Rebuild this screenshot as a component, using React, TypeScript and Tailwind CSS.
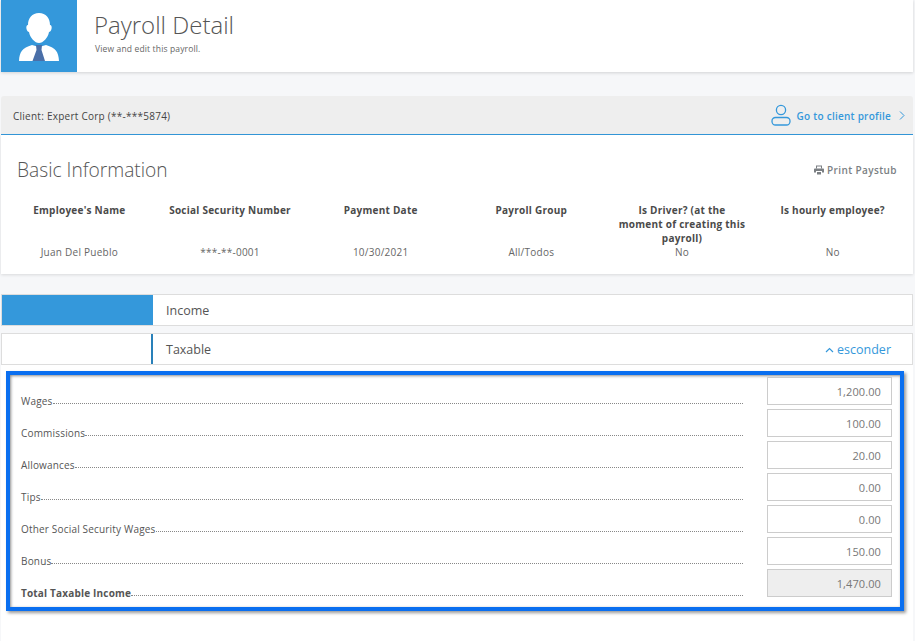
import React from 'react';

const columns = [
  { title: "Employee's Name", value: 'Juan Del Pueblo' },
  { title: 'Social Security Number', value: '***-**-0001' },
  { title: 'Payment Date', value: '10/30/2021' },
  { title: 'Payroll Group', value: 'All/Todos' },
  { title: 'Is Driver? (at the moment of creating this payroll)', value: 'No' },
  { title: 'Is hourly employee?', value: 'No' },
];

const incomeRows = [
  { label: 'Wages', amount: '1,200.00' },
  { label: 'Commissions', amount: '100.00' },
  { label: 'Allowances', amount: '20.00' },
  { label: 'Tips', amount: '0.00' },
  { label: 'Other Social Security Wages', amount: '0.00' },
  { label: 'Bonus', amount: '150.00' },
  { label: 'Total Taxable Income', amount: '1,470.00', total: true },
];

// Employee avatar with tie, header logo
const EmployeeIcon = () => (
  <svg width="40" height="50" viewBox="0 0 40 50">
    <path d="M20 1 C27 1 31 6 31 13 C32.500 13 33 15 32.500 17 C32 19 31 20 30 20 C29 26 24 31 20 31 C16 31 11 26 10 20 C9 20 8 19 7.500 17 C7 15 7.500 13 9 13 C9 6 13 1 20 1 Z" fill="#fff" />
    <path d="M0 49 C0.500 40 3 36 13 33 L20 35 L27 33 C37 36 39.500 40 40 49 Z" fill="#fff" />
    <path d="M17 33 H23 L22.500 38 L26 49 H13.500 L17.500 38 Z" fill="#4a6fa8" />
  </svg>
);

const UserOutlineIcon = () => (
  <svg width="20" height="22" viewBox="0 0 20 22" fill="none" stroke="#3498db" strokeWidth="1.300">
    <circle cx="10" cy="6" r="4.600" />
    <rect x="1" y="13.500" width="18" height="7.500" rx="3.500" />
  </svg>
);

const PrinterIcon = () => (
  <svg width="10" height="10" viewBox="0 0 10 10" fill="#7b7f83">
    <path d="M2 0.500 H8 V3.500 H7 V1.500 H3 V3.500 H2 Z" />
    <path d="M1 3.500 H9 C9.600 3.500 10 3.900 10 4.500 V7.500 H8 V6 H2 V7.500 H0 V4.500 C0 3.900 0.400 3.500 1 3.500 Z" />
    <path d="M3 7 H7 V9.500 H3 Z" />
  </svg>
);

export default function App() {
  return (
    <div className="h-[641px] w-[915px] overflow-hidden bg-[#f6f7f9] pl-px pr-[2px] font-['Open_Sans',sans-serif] text-[#555]">
      {/* Page header */}
      <div className="flex h-[72px] bg-white shadow-[0_1px_3px_rgba(0,0,0,0.15)]">
        <div className="flex w-[76px] items-center justify-center bg-[#3498db] pt-px">
          <EmployeeIcon />
        </div>
        <div className="pl-[17px] pt-[9px]">
          <h1 className="text-[24px] leading-[32px] font-light text-[#555]">Payroll Detail</h1>
          <p className="mt-[2px] pl-px text-[8.500px] leading-[12px] tracking-[0.15px] text-[#666]">View and edit this payroll.</p>
        </div>
      </div>

      {/* Client bar */}
      <div className="mt-6 flex h-[39px] items-center justify-between rounded-t-[3px] border-b border-[#3498db] bg-[#eeeeee] pl-3 pr-2">
        <span className="translate-y-px text-[10px] tracking-[0.25px] text-[#444]">Client: Expert Corp (**-***5874)</span>
        <a className="flex items-center text-[10px] font-semibold tracking-[0.25px] text-[#3498db]">
          <UserOutlineIcon />
          <span className="ml-[6px] translate-y-px">Go to client profile</span>
          <svg width="6" height="9" viewBox="0 0 6 9" fill="none" stroke="#3498db" strokeWidth="1" className="ml-[8px]">
            <path d="M1 0.500 L5 4.500 L1 8.500" />
          </svg>
        </a>
      </div>

      {/* Basic information */}
      <div className="h-[139px] bg-white shadow-[0_1px_3px_rgba(0,0,0,0.12)]">
        <div className="flex items-center justify-between pl-[16px] pr-[16px] pt-[21px]">
          <h2 className="text-[19.200px] leading-[28px] font-light text-[#555]">Basic Information</h2>
          <button className="flex items-center gap-[3px] text-[10px] font-semibold tracking-[0.4px] text-[#7b7f83]">
            <PrinterIcon />
            Print Paystub
          </button>
        </div>
        <div className="mt-[19px] grid grid-cols-6 pl-[3px] pr-[5px]">
          {columns.map((col) => (
            <div key={col.title} className="flex flex-col px-3 text-center">
              <div className="h-[42px] text-[10px] leading-[14px] font-bold tracking-[0.25px] text-[#4a4a4a]">{col.title}</div>
              <div className="text-[10px] leading-[14px] tracking-[0.25px] text-[#666]">{col.value}</div>
            </div>
          ))}
        </div>
      </div>

      {/* Income section */}
      <div className="mt-5 flex h-[32px] border border-[#dddddd] bg-white">
        <div className="w-[151px] bg-[#3498db]" />
        <div className="flex translate-y-px items-center pl-[13px] text-[12.500px] text-[#555]">Income</div>
      </div>
      <div className="mt-[7px] flex h-[32px] items-center border border-[#dddddd] bg-white">
        <div className="h-full w-[151px] border-r-2 border-[#2980b9]" />
        <div className="flex flex-1 translate-y-px items-center justify-between pl-[13px] pr-[21px]">
          <span className="text-[12.500px] text-[#555]">Taxable</span>
          <span className="flex items-center text-[12.500px] text-[#3498db]">
            <svg width="9" height="6" viewBox="0 0 9 6" fill="none" stroke="#3498db" strokeWidth="1.200" className="mr-[3px]">
              <path d="M1 5 L4.500 1.500 L8 5" />
            </svg>
            esconder
          </span>
        </div>
      </div>

      {/* Taxable detail, outlined in blue in the screenshot */}
      <div className="h-[276px] bg-white pl-[5px] pr-[9px] pt-[6px]">
        <div className="h-[240px] border-4 border-[#0a6ff0] bg-white pl-[11px] pr-[8px] pt-[2px] shadow-[inset_1px_1px_3px_rgba(0,0,0,0.45),2px_2px_3px_rgba(0,0,0,0.4)]">
          <div className="flex flex-col gap-1">
            {incomeRows.map((row) => (
              <div key={row.label} className="flex h-[28px] items-end">
                <span className={`translate-y-[3px] text-[10px] leading-[13px] tracking-[0.18px] text-[#555] ${row.total ? 'font-bold' : ''}`}>
                  {row.label}
                </span>
                <span className="mb-px flex-1 border-b border-dotted border-[#888]" />
                <input
                  readOnly
                  value={row.amount}
                  className={`ml-6 h-[28px] w-[125px] border border-[#cccccc] px-[10px] text-right text-[11px] tracking-[0.1px] text-[#777] outline-none ${row.total ? 'bg-[#eeeeee]' : 'bg-white'}`}
                />
              </div>
            ))}
          </div>
        </div>
      </div>
    </div>
  );
}
